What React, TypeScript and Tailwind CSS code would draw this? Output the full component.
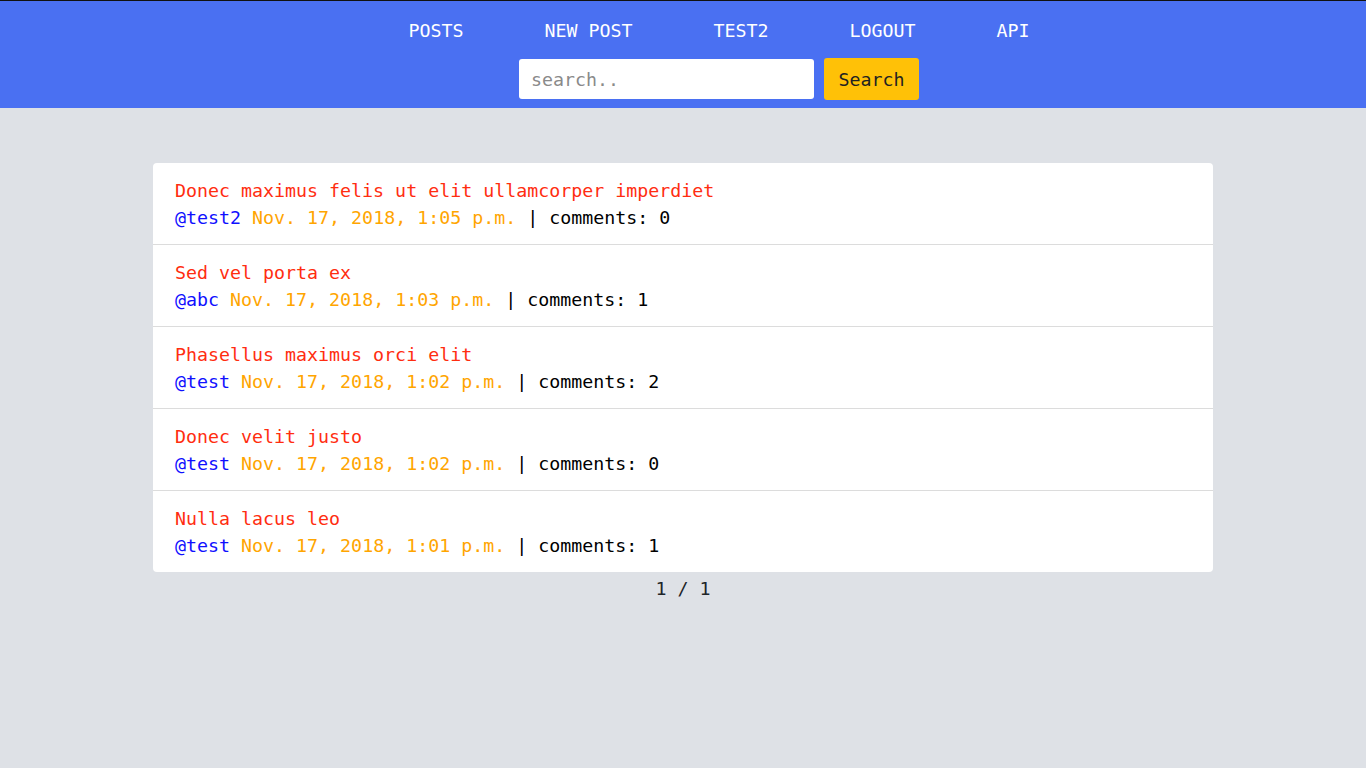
const NAV = ["POSTS", "NEW POST", "TEST2", "LOGOUT", "API"];

const POSTS = [
  { title: "Donec maximus felis ut elit ullamcorper imperdiet", user: "test2", date: "Nov. 17, 2018, 1:05 p.m.", comments: 0 },
  { title: "Sed vel porta ex", user: "abc", date: "Nov. 17, 2018, 1:03 p.m.", comments: 1 },
  { title: "Phasellus maximus orci elit", user: "test", date: "Nov. 17, 2018, 1:02 p.m.", comments: 2 },
  { title: "Donec velit justo", user: "test", date: "Nov. 17, 2018, 1:02 p.m.", comments: 0 },
  { title: "Nulla lacus leo", user: "test", date: "Nov. 17, 2018, 1:01 p.m.", comments: 1 },
];

export default function App() {
  return (
    <div className="min-h-[768px] bg-[#dee1e6] text-[18.3px] leading-[27px] font-['DejaVu_Sans_Mono',monospace]">
      {/* Header */}
      <header className="bg-[#4a70f2] border-t border-[#111] pl-[72px]">
        <nav className="flex justify-center gap-[81px] pt-[16px] text-white">
          {NAV.map((n) => (
            <a key={n} className="cursor-pointer">{n}</a>
          ))}
        </nav>
        <form className="flex justify-center items-center gap-[10px] pt-[14px] pb-[8px]" onSubmit={(e) => e.preventDefault()}>
          <input
            placeholder="search.."
            className="w-[295px] h-[40px] rounded-[3px] bg-white px-3 text-[18.3px] text-[#333] placeholder:text-[#8a8a8a] outline-none"
          />
          <button className="w-[95px] h-[42px] rounded-[3px] bg-[#ffc107] text-[#222]">Search</button>
        </form>
      </header>

      {/* Posts */}
      <main className="pt-[55px] flex flex-col items-center">
        <ul className="w-[1060px] bg-white rounded-[4px]">
          {POSTS.map((p, i) => (
            <li
              key={i}
              className={`px-[22px] pt-[14px] pb-[13px] ${i < POSTS.length - 1 ? "border-b border-[#dcdcdc]" : ""}`}
            >
              <div className="text-[#ff2d10]">{p.title}</div>
              <div>
                <span className="text-[#1010ff]">@{p.user}</span>{" "}
                <span className="text-[#ffa500]">{p.date}</span>{" "}
                <span className="text-black">| comments: {p.comments}</span>
              </div>
            </li>
          ))}
        </ul>
        <div className="mt-[3px] text-[#212529]">1 / 1</div>
      </main>
    </div>
  );
}
